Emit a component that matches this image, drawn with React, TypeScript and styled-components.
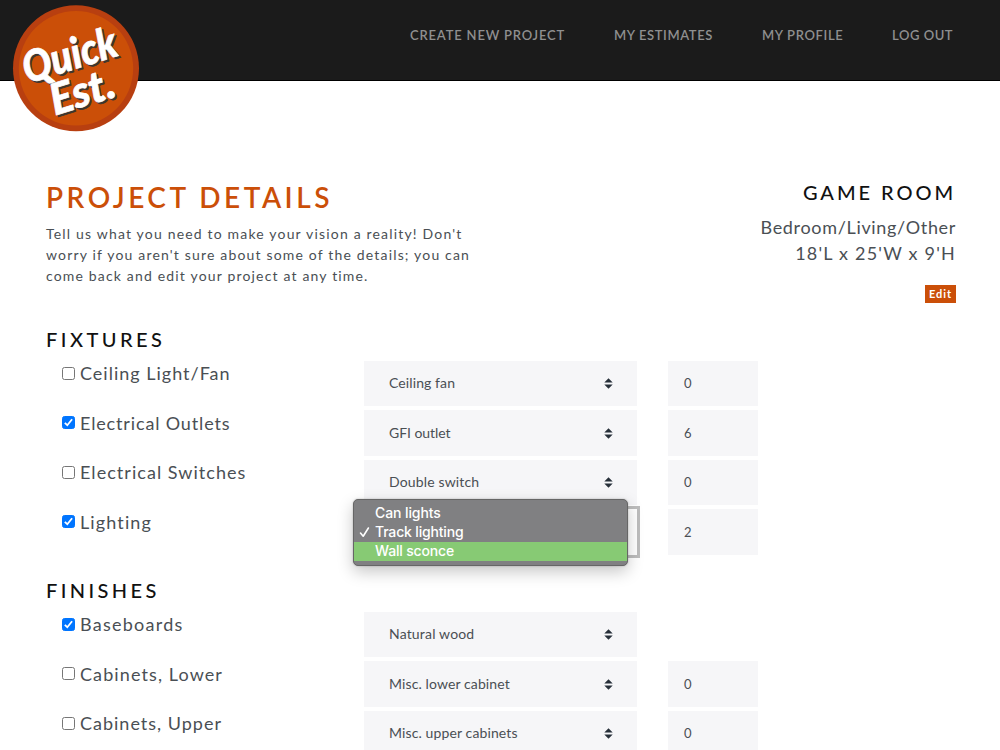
import React from "react";
import styled, { createGlobalStyle } from "styled-components";

const GlobalStyle = createGlobalStyle`
  *, *::before, *::after { box-sizing: border-box; }
  html, body { margin: 0; padding: 0; background: #fff; }
  body {
    width: 1000px;
    height: 750px;
    overflow: hidden;
    font-family: Lato, "Open Sans", sans-serif;
    color: #4a4f54;
  }
  h1, h2, p, ul { margin: 0; padding: 0; }
`;

const Page = styled.div`
  width: 1000px;
  height: 750px;
  overflow: hidden;
`;

const Header = styled.header`
  position: relative;
  display: flex;
  justify-content: flex-end;
  height: 81px;
  padding: 25px 46px 0 0;
  background: #1b1b1b;
  border-bottom: 1px solid #000;
`;

const Nav = styled.nav`
  display: flex;
  gap: 49px;
`;

const NavLink = styled.a<{ $width: number; $track: number }>`
  width: ${(p) => p.$width}px;
  white-space: nowrap;
  font-size: 13px;
  line-height: 20px;
  font-weight: 600;
  letter-spacing: ${(p) => p.$track}px;
  color: #8f8f8f;
`;

const Logo = styled.svg`
  position: absolute;
  left: 12px;
  top: 4px;
  width: 128px;
  height: 128px;
`;

const Main = styled.main`
  padding: 99px 44px 0 46px;
`;

const Intro = styled.section`
  display: flex;
  justify-content: space-between;
  height: 142px;
`;

const IntroCopy = styled.div`
  width: 440px;
`;

const Title = styled.h1`
  font-size: 28px;
  line-height: 34px;
  font-weight: 600;
  letter-spacing: 3.5px;
  color: #cb4f08;
`;

const Lead = styled.p`
  margin-top: 8.6px;
  font-size: 14px;
  line-height: 21.3px;
`;

const Line = styled.span<{ $track: number }>`
  display: block;
  white-space: nowrap;
  letter-spacing: ${(p) => p.$track}px;
`;

const Summary = styled.div`
  display: flex;
  flex-direction: column;
  align-items: flex-end;
  margin-top: -1px;
`;

const RoomName = styled.h2`
  font-size: 20px;
  line-height: 26px;
  font-weight: 500;
  letter-spacing: 2.95px;
  color: #111;
`;

const RoomInfo = styled.div`
  margin-top: 9px;
  text-align: right;
  font-size: 18px;
  line-height: 26px;
`;

const EditButton = styled.button`
  margin-top: 19px;
  width: 31px;
  height: 18px;
  padding: 0;
  border: 0;
  background: #cb4f08;
  color: #fff;
  font: 700 11px/18px Lato, sans-serif;
  letter-spacing: 0.9px;
`;

const Group = styled.section`
  height: 251px;
`;

const GroupTitle = styled.h2<{ $track: number }>`
  height: 38.9px;
  font-size: 20px;
  line-height: 34px;
  font-weight: 500;
  letter-spacing: ${(p) => p.$track}px;
  color: #111;
`;

const Row = styled.div`
  display: grid;
  grid-template-columns: 271px 273px 90px;
  column-gap: 31px;
  height: 49.5px;
  margin-left: 16px;
`;

const Option = styled.label<{ $track: number }>`
  display: flex;
  align-items: flex-start;
  gap: 5px;
  height: 26px;
  padding-top: 0.25px;
  font-size: 18px;
  line-height: 25px;
  letter-spacing: ${(p) => p.$track}px;
  white-space: nowrap;
`;

const Box = styled.span<{ $on: boolean }>`
  display: flex;
  width: 13px;
  height: 13px;
  margin-top: 5.75px;
  flex: none;
  border-radius: 2.5px;
  border: 1px solid ${(p) => (p.$on ? "#0075ff" : "#767676")};
  background: ${(p) => (p.$on ? "#0075ff" : "#fff")};
`;

const Select = styled.div<{ $open?: boolean; $track: number }>`
  position: relative;
  display: flex;
  align-items: center;
  justify-content: space-between;
  height: 45.3px;
  padding: 0 24px 0 25px;
  background: ${(p) => (p.$open ? "#fff" : "#f6f6f8")};
  outline: ${(p) => (p.$open ? "3px solid #bdbdbd" : "none")};
  font-size: 14px;
  letter-spacing: ${(p) => p.$track}px;
`;

const Value = styled.span`
  padding-bottom: 1.6px;
`;

const Quantity = styled.div`
  height: 45.3px;
  padding: 0.25px 0 0 16px;
  background: #f6f6f8;
  font-size: 13px;
  line-height: 44px;
`;

const Menu = styled.div`
  position: absolute;
  z-index: 2;
  left: -11px;
  top: -10.4px;
  width: 275px;
  height: 67px;
  padding-top: 3.6px;
  border: 1px solid #666;
  border-radius: 5px;
  background: #808082;
  box-shadow: 0 6px 16px rgba(0, 0, 0, 0.22), 0 0 2px rgba(0, 0, 0, 0.25);
  overflow: hidden;
`;

const MenuItem = styled.div<{ $active?: boolean; $track: number }>`
  height: 19.2px;
  display: flex;
  padding-left: 5px;
  background: ${(p) => (p.$active ? "#87ca74" : "transparent")};
  color: #fff;
  font: 500 14px/18px Inter, sans-serif;
  letter-spacing: ${(p) => p.$track}px;
`;

const Mark = styled.span`
  display: flex;
  align-items: center;
  width: 16px;
`;

const Arrows = () => (
  <svg width="9" height="11" viewBox="0 0 9 11" fill="#27303a">
    <path d="M4.5 .3 8.7 4.6H.3z M.3 6.4h8.4L4.5 10.7z" />
  </svg>
);

const Tick = () => (
  <svg width="11" height="11" viewBox="0 0 11 11" fill="none" stroke="#fff" strokeWidth="1.8">
    <path d="M1.8 5.8 4.3 8.2 9.1 2.2" />
  </svg>
);

type Item = { label: string; track: number; on: boolean; value: string; vTrack: number; qty?: string; open?: boolean };

const fixtures: Item[] = [
  { label: "Ceiling Light/Fan", track: 1, on: false, value: "Ceiling fan", vTrack: 0.1, qty: "0" },
  { label: "Electrical Outlets", track: 0.85, on: true, value: "GFI outlet", vTrack: -0.05, qty: "6" },
  { label: "Electrical Switches", track: 1.04, on: false, value: "Double switch", vTrack: 0.15, qty: "0" },
  { label: "Lighting", track: 1.12, on: true, value: "", vTrack: 0, qty: "2", open: true },
];

const finishes: Item[] = [
  { label: "Baseboards", track: 1.25, on: true, value: "Natural wood", vTrack: 0.17 },
  { label: "Cabinets, Lower", track: 1.1, on: false, value: "Misc. lower cabinet", vTrack: 0.11, qty: "0" },
  { label: "Cabinets, Upper", track: 1, on: false, value: "Misc. upper cabinets", vTrack: 0.12, qty: "0" },
];

const LightingMenu = () => (
  <Menu>
    <MenuItem $track={-0.1}><Mark />Can lights</MenuItem>
    <MenuItem $track={-0.17}>
      <Mark>
        <svg width="11" height="12" viewBox="0 0 11 12" fill="none" stroke="#fff" strokeWidth="1.6" strokeLinecap="round" strokeLinejoin="round">
          <path d="M1.5 7 4.2 10.2 9.4 2" />
        </svg>
      </Mark>
      Track lighting
    </MenuItem>
    <MenuItem $track={-0.17} $active><Mark />Wall sconce</MenuItem>
  </Menu>
);

const OptionGroup = ({ title, track, items }: { title: string; track: number; items: Item[] }) => (
  <Group>
    <GroupTitle $track={track}>{title}</GroupTitle>
    {items.map((it) => (
      <Row key={it.label}>
        <Option $track={it.track}>
          <Box $on={it.on}>{it.on && <Tick />}</Box>
          {it.label}
        </Option>
        <Select $open={it.open} $track={it.vTrack}>
          <Value>{it.value}</Value>
          {it.open ? <LightingMenu /> : <Arrows />}
        </Select>
        {it.qty && <Quantity>{it.qty}</Quantity>}
      </Row>
    ))}
  </Group>
);

const LogoWords = () => (
  <>
    <text x="13" y="54" fontSize="36" textLength="97" lengthAdjust="spacingAndGlyphs">Quick</text>
    <text x="30" y="86" fontSize="36" textLength="66" lengthAdjust="spacingAndGlyphs">Est.</text>
  </>
);

export default function App() {
  return (
    <Page>
      <GlobalStyle />
      <Header>
        <Logo viewBox="0 0 128 128">
          <circle cx="64" cy="64.3" r="63" fill="#b83f10" />
          <circle cx="64" cy="64.3" r="57.2" fill="#cb4f08" />
          <g
            fontFamily="Lato, sans-serif"
            fontWeight="900"
            fontStyle="italic"
            strokeWidth="0.6"
            strokeLinejoin="round"
            transform="rotate(-17 64 64) scale(1 1.2)"
          >
            <g fill="#3a3531" stroke="#3a3531" transform="translate(1.2 1.8)">
              <LogoWords />
            </g>
            <g fill="#fff" stroke="#fff">
              <LogoWords />
            </g>
          </g>
        </Logo>
        <Nav>
          <NavLink $width={155} $track={0.82}>CREATE NEW PROJECT</NavLink>
          <NavLink $width={99} $track={0.6}>MY ESTIMATES</NavLink>
          <NavLink $width={81} $track={0.65}>MY PROFILE</NavLink>
          <NavLink $width={62} $track={0.55}>LOG OUT</NavLink>
        </Nav>
      </Header>
      <Main>
        <Intro>
          <IntroCopy>
            <Title>PROJECT DETAILS</Title>
            <Lead>
              <Line $track={1.18}>Tell us what you need to make your vision a reality! Don't</Line>
              <Line $track={1.17}>worry if you aren't sure about some of the details; you can</Line>
              <Line $track={1.17}>come back and edit your project at any time.</Line>
            </Lead>
          </IntroCopy>
          <Summary>
            <RoomName>GAME ROOM</RoomName>
            <RoomInfo>
              <Line $track={0.67}>Bedroom/Living/Other</Line>
              <Line $track={1.2}>18'L x 25'W x 9'H</Line>
            </RoomInfo>
            <EditButton>Edit</EditButton>
          </Summary>
        </Intro>
        <OptionGroup title="FIXTURES" track={3.45} items={fixtures} />
        <OptionGroup title="FINISHES" track={3.4} items={finishes} />
      </Main>
    </Page>
  );
}
